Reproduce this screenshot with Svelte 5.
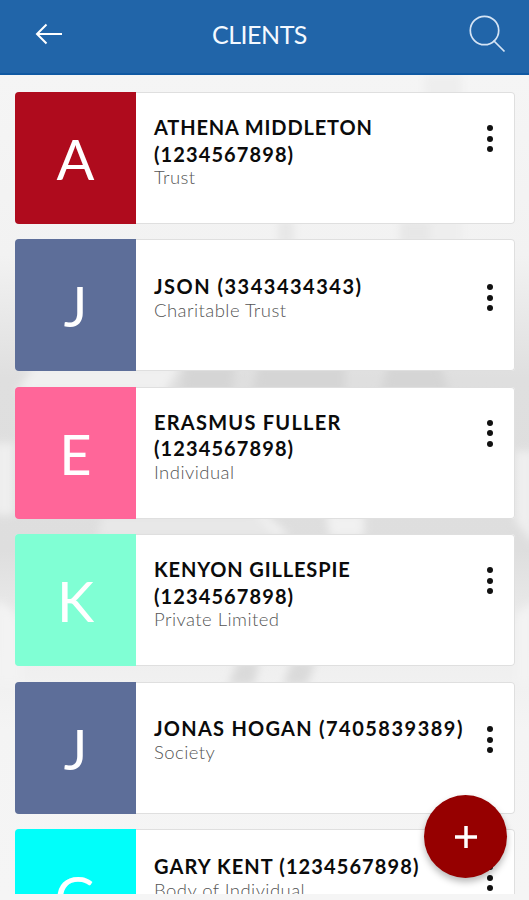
<script>
  // tracking values are [name, number], in px
  const clients = [
    { name: "ATHENA MIDDLETON", number: "1234567898", type: "Trust", color: "#af0b1d", tracking: [0.85, 1.1] },
    { name: "JSON", number: "3343434343", type: "Charitable Trust", color: "#5d6e99", tracking: [1.5, 1.5], short: true },
    { name: "ERASMUS FULLER", number: "1234567898", type: "Individual", color: "#ff6699", tracking: [1.25, 1.1] },
    { name: "KENYON GILLESPIE", number: "1234567898", type: "Private Limited", color: "#80ffd4", tracking: [0.87, 1.1] },
    { name: "JONAS HOGAN", number: "7405839389", type: "Society", color: "#5d6e99", tracking: [1.25, 1.5], short: true },
    { name: "GARY KENT", number: "1234567898", type: "Body of Individual", color: "#00fffa", tracking: [1.1, 1.1], tall: true }
  ];
</script>

<div class="screen">
  <header class="bar">
    <button class="icon" aria-label="Back">
      <svg width="28" height="22" viewBox="0 0 28 22">
        <path d="M27 11H2M11.5 1.5L2 11L11.5 20.5" />
      </svg>
    </button>
    <h1>CLIENTS</h1>
    <button class="icon search" aria-label="Search">
      <svg width="37" height="38" viewBox="0 0 37 38">
        <circle cx="15.5" cy="15.5" r="14.2" />
        <path d="M24.5 25.5L35.5 36.5" />
      </svg>
    </button>
  </header>

  <main>
    <svg class="backdrop" width="529" height="819" viewBox="0 0 529 819" aria-hidden="true">
      <defs>
        <linearGradient id="fade" x1="0" y1="0" x2="0" y2="1">
          <stop offset="0" stop-color="#f5f5f5" />
          <stop offset="0.22" stop-color="#f2f2f2" />
          <stop offset="0.37" stop-color="#dfdfdf" />
          <stop offset="0.58" stop-color="#dedede" />
          <stop offset="0.68" stop-color="#ededed" />
          <stop offset="0.8" stop-color="#f4f4f4" />
          <stop offset="1" stop-color="#f5f5f5" />
        </linearGradient>
        <filter id="soft"><feGaussianBlur stdDeviation="4" /></filter>
      </defs>
      <rect width="529" height="819" fill="url(#fade)" />
      <g filter="url(#soft)">
        <path d="M424 0H462V170H430Z" fill="#eeeeee" />
        <path d="M278 145H294V170H278ZM400 145H430V170H400Z" fill="#e7e7e7" />
        <path d="M34 290H180L165 318H16Z" fill="#f0f0f0" />
        <path d="M185 290H235L232 318H180ZM258 290H345V318H252ZM388 290H440L450 318H380Z" fill="#d5d5d5" />
        <path d="M-5 368H14V440H-5ZM515 376H534V470L515 445Z" fill="#efefef" />
        <path d="M103 440H260L286 462H97Z" fill="#e8e8e8" />
        <path d="M264 438L290 460H274L255 438ZM326 438H364V462H330Z" fill="#f1f1f1" />
        <path d="M-5 526Q12 530 22 550V610H-5ZM534 526L515 540V610H534Z" fill="#f3f3f3" />
        <path d="M238 586H260L254 610H228ZM292 586H316L307 610H283Z" fill="#dadada" />
      </g>
    </svg>

    <ul class="list">
      {#each clients as client}
        <li class="card">
          <div class="avatar" style="background-color: {client.color}">{client.name[0]}</div>
          <div class="details" class:tall={client.tall} class:short={client.short}>
            <div class="text">
              <h2 style="letter-spacing: {client.tracking[0]}px">
                {client.name}
                <span style="letter-spacing: {client.tracking[1]}px">({client.number})</span>
              </h2>
              <p>{client.type}</p>
            </div>
            <button class="more" aria-label="More options">
              <i></i><i></i><i></i>
            </button>
          </div>
        </li>
      {/each}
    </ul>
  </main>

  <button class="fab" aria-label="Add client">
    <svg width="22" height="22" viewBox="0 0 22 22">
      <path d="M11 0V22M0 11H22" />
    </svg>
  </button>
</div>

<style>
  :global(body) {
    margin: 0;
    background: #f5f5f5;
  }
  .screen {
    position: relative;
    width: 529px;
    height: 900px;
    overflow: hidden;
    background: #f5f5f5;
    font-family: Lato, "Open Sans", sans-serif;
  }
  button {
    display: block;
    padding: 0;
    border: 0;
    background: none;
  }
  svg {
    display: block;
  }
  .bar {
    display: flex;
    align-items: flex-start;
    justify-content: space-between;
    box-sizing: border-box;
    height: 75px;
    padding: 15px 23px 0 35px;
    border-bottom: 2px solid #1059a2;
    background: #2165a9;
    box-shadow: 0 1px 1px #a6bfdc;
  }
  .bar svg {
    fill: none;
    stroke: #fff;
    stroke-width: 2;
  }
  .bar .icon {
    margin-top: 8px;
  }
  .bar .search {
    margin-top: 0;
  }
  .search svg {
    stroke: #d5e4f5;
    stroke-width: 1.7;
  }
  h1 {
    margin: 0 13px 0 0;
    color: #f4f9ff;
    font-size: 25px;
    font-weight: 400;
    line-height: 39px;
    letter-spacing: -0.5px;
  }
  main {
    position: relative;
    height: 818.5px;
    overflow: hidden;
  }
  .backdrop {
    position: absolute;
    top: 0;
    left: 0;
  }
  .list {
    position: relative;
    display: flex;
    flex-direction: column;
    gap: 15.4px;
    margin: 0;
    padding: 17px 14px 0 15px;
    list-style: none;
  }
  .card {
    display: flex;
    flex: none;
    height: 132px;
    border-radius: 4px;
    overflow: hidden;
    background: #fff;
    box-shadow: inset 0 0 0 1px #dfdfdf;
  }
  .avatar {
    flex: none;
    width: 121px;
    color: #fff;
    font-size: 56px;
    line-height: 133px;
    text-align: center;
  }
  .details {
    display: flex;
    flex: 1;
    align-items: flex-start;
    align-self: center;
    justify-content: space-between;
    padding: 0 22px 15px 18px;
  }
  .details.short {
    padding-bottom: 18px;
  }
  .details.tall {
    padding-bottom: 37px;
  }
  .text {
    width: 316px;
  }
  h2 {
    margin: 0;
    color: #0b0b0b;
    font-size: 20px;
    font-weight: 700;
    line-height: 26.5px;
  }
  h2 span {
    white-space: nowrap;
  }
  p {
    margin: 0;
    color: #555;
    font-size: 18.5px;
    font-weight: 300;
    line-height: 20px;
    letter-spacing: 0.45px;
  }
  .more {
    display: flex;
    flex-direction: column;
    gap: 4.5px;
    margin-top: 11px;
  }
  .more i {
    width: 6px;
    height: 6px;
    border-radius: 50%;
    background: #111;
  }
  .fab {
    position: absolute;
    right: 22px;
    bottom: 22px;
    display: flex;
    align-items: center;
    justify-content: center;
    width: 83px;
    height: 83px;
    border-radius: 50%;
    background: #960000;
    box-shadow: 0 4px 7px rgba(0, 0, 0, 0.28);
  }
  .fab path {
    stroke: #fff;
    stroke-width: 3.5;
  }
</style>
